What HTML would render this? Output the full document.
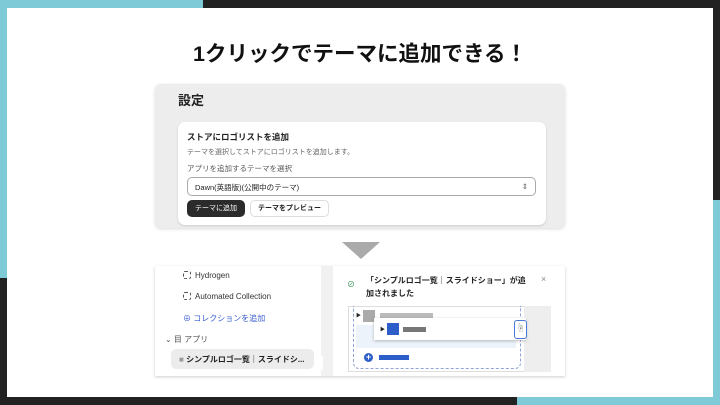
<!DOCTYPE html>
<html><head><meta charset="utf-8"><style>
*{margin:0;padding:0;box-sizing:border-box}
body{width:720px;height:405px;position:relative;overflow:hidden;background:#222;font-family:"Liberation Sans","Noto Sans CJK JP",sans-serif;color:#222}
.a{position:absolute}
.ib{display:inline-block;width:8px;height:8px;border:1.2px dashed #555;border-radius:2px;vertical-align:-1px;margin-right:4px}
</style></head><body>
<div class="a" style="left:0;top:0;width:203px;height:8px;background:#7ecad6"></div>
<div class="a" style="left:0;top:0;width:7px;height:278px;background:#7ecad6"></div>
<div class="a" style="left:713px;top:200px;width:7px;height:205px;background:#7ecad6"></div>
<div class="a" style="left:517px;top:397px;width:203px;height:8px;background:#7ecad6"></div>
<div class="a" style="left:7px;top:8px;width:706px;height:389px;background:#fff"></div>
<div class="a" style="left:0;top:37px;width:720px;text-align:center;font-size:21.5px;font-weight:bold;color:#111">1クリックでテーマに追加できる！</div>

<div class="a" style="left:155px;top:84px;width:410px;height:144px;background:#ededed;border-radius:6px;box-shadow:0 1px 3px rgba(0,0,0,.15)"></div>
<div class="a" style="left:178px;top:90px;font-size:13px;font-weight:bold">設定</div>
<div class="a" style="left:178px;top:122px;width:368px;height:103px;background:#fff;border-radius:7px;box-shadow:0 1px 2px rgba(0,0,0,.15)"></div>
<div class="a" style="left:187px;top:131px;font-size:8.5px;font-weight:bold">ストアにロゴリストを追加</div>
<div class="a" style="left:187px;top:147px;font-size:7px;color:#666">テーマを選択してストアにロゴリストを追加します。</div>
<div class="a" style="left:187px;top:163px;font-size:7.5px;color:#555">アプリを追加するテーマを選択</div>
<div class="a" style="left:187px;top:177px;width:349px;height:19px;border:1px solid #aaa;border-radius:5px;font-size:7.5px;padding:4px 7px">Dawn(英語版)(公開中のテーマ)<span style="float:right;color:#666">⇕</span></div>
<div class="a" style="left:187px;top:200px;width:58px;height:17px;background:#2b2b2b;border-radius:5px;color:#fff;font-size:7px;text-align:center;line-height:17px">テーマに追加</div>
<div class="a" style="left:250px;top:200px;width:79px;height:17px;border:1px solid #ddd;border-radius:5px;font-size:7px;text-align:center;line-height:15px;font-weight:bold">テーマをプレビュー</div>

<div class="a" style="left:342px;top:242px;width:0;height:0;border-left:19px solid transparent;border-right:19px solid transparent;border-top:17px solid #aaa"></div>

<div class="a" style="left:155px;top:266px;width:410px;height:110px;background:#fff;box-shadow:0 1px 3px rgba(0,0,0,.2)"></div>
<div class="a" style="left:321px;top:266px;width:12px;height:110px;background:#f1f1f1"></div>
<div class="a" style="left:183px;top:271px;font-size:8px;color:#333"><span class="ib"></span>Hydrogen</div>
<div class="a" style="left:183px;top:292px;font-size:8px;color:#333"><span class="ib"></span>Automated Collection</div>
<div class="a" style="left:183px;top:313px;font-size:8px;color:#3a5fd0">⊕ コレクションを追加</div>
<div class="a" style="left:165px;top:334px;font-size:8px;color:#555">⌄ 目 アプリ</div>
<div class="a" style="left:171px;top:349px;width:143px;height:20px;background:#ececec;border-radius:5px;font-size:8px;font-weight:bold;padding:5px 8px"><span style="color:#999">■</span> シンプルロゴ一覧｜スライドシ...</div>
<div class="a" style="left:315px;top:355px;width:0;height:0;border-top:8px solid transparent;border-bottom:8px solid transparent;border-right:8px solid #fff"></div>
<div class="a" style="left:347px;top:279px;font-size:8px;color:#2a8a4a">⊘</div>
<div class="a" style="left:366px;top:274px;width:164px;font-size:8px;font-weight:bold;line-height:13px">「シンプルロゴ一覧｜スライドショー」が追加されました</div>
<div class="a" style="left:541px;top:274px;font-size:9px;color:#888">×</div>
<div class="a" style="left:348px;top:306px;width:203px;height:66px;background:#fff;border:1px solid #ddd"></div>
<div class="a" style="left:524px;top:306px;width:27px;height:66px;background:#eee"></div>
<div class="a" style="left:353px;top:306px;width:168px;height:63px;border:1px dashed #8ea4d8;border-top:none;border-radius:0 0 6px 6px"></div>
<div class="a" style="left:356px;top:312px;font-size:5px">▶</div>
<div class="a" style="left:363px;top:310px;width:12px;height:12px;background:#aaa"></div>
<div class="a" style="left:380px;top:313px;width:53px;height:5px;background:#bbb"></div>
<div class="a" style="left:356px;top:325px;width:160px;height:23px;background:#edf3fb"></div>
<div class="a" style="left:374px;top:318px;width:152px;height:22px;background:#fff;box-shadow:0 1px 3px rgba(0,0,0,.25)"></div>
<div class="a" style="left:380px;top:326px;font-size:5px">▶</div>
<div class="a" style="left:387px;top:323px;width:12px;height:12px;background:#2d5dc8"></div>
<div class="a" style="left:403px;top:327px;width:23px;height:5px;background:#777"></div>
<div class="a" style="left:514px;top:320px;width:13px;height:19px;border:1.5px solid #4a78d8;border-radius:3px;background:#fff;font-size:9px;text-align:center;color:#888">☝</div>
<div class="a" style="left:364px;top:353px;width:9px;height:9px;border-radius:50%;background:#2d5dc8;color:#fff;font-size:9px;line-height:9px;text-align:center;font-weight:bold">+</div>
<div class="a" style="left:379px;top:355px;width:30px;height:5px;background:#2d5dc8"></div>
</body></html>
